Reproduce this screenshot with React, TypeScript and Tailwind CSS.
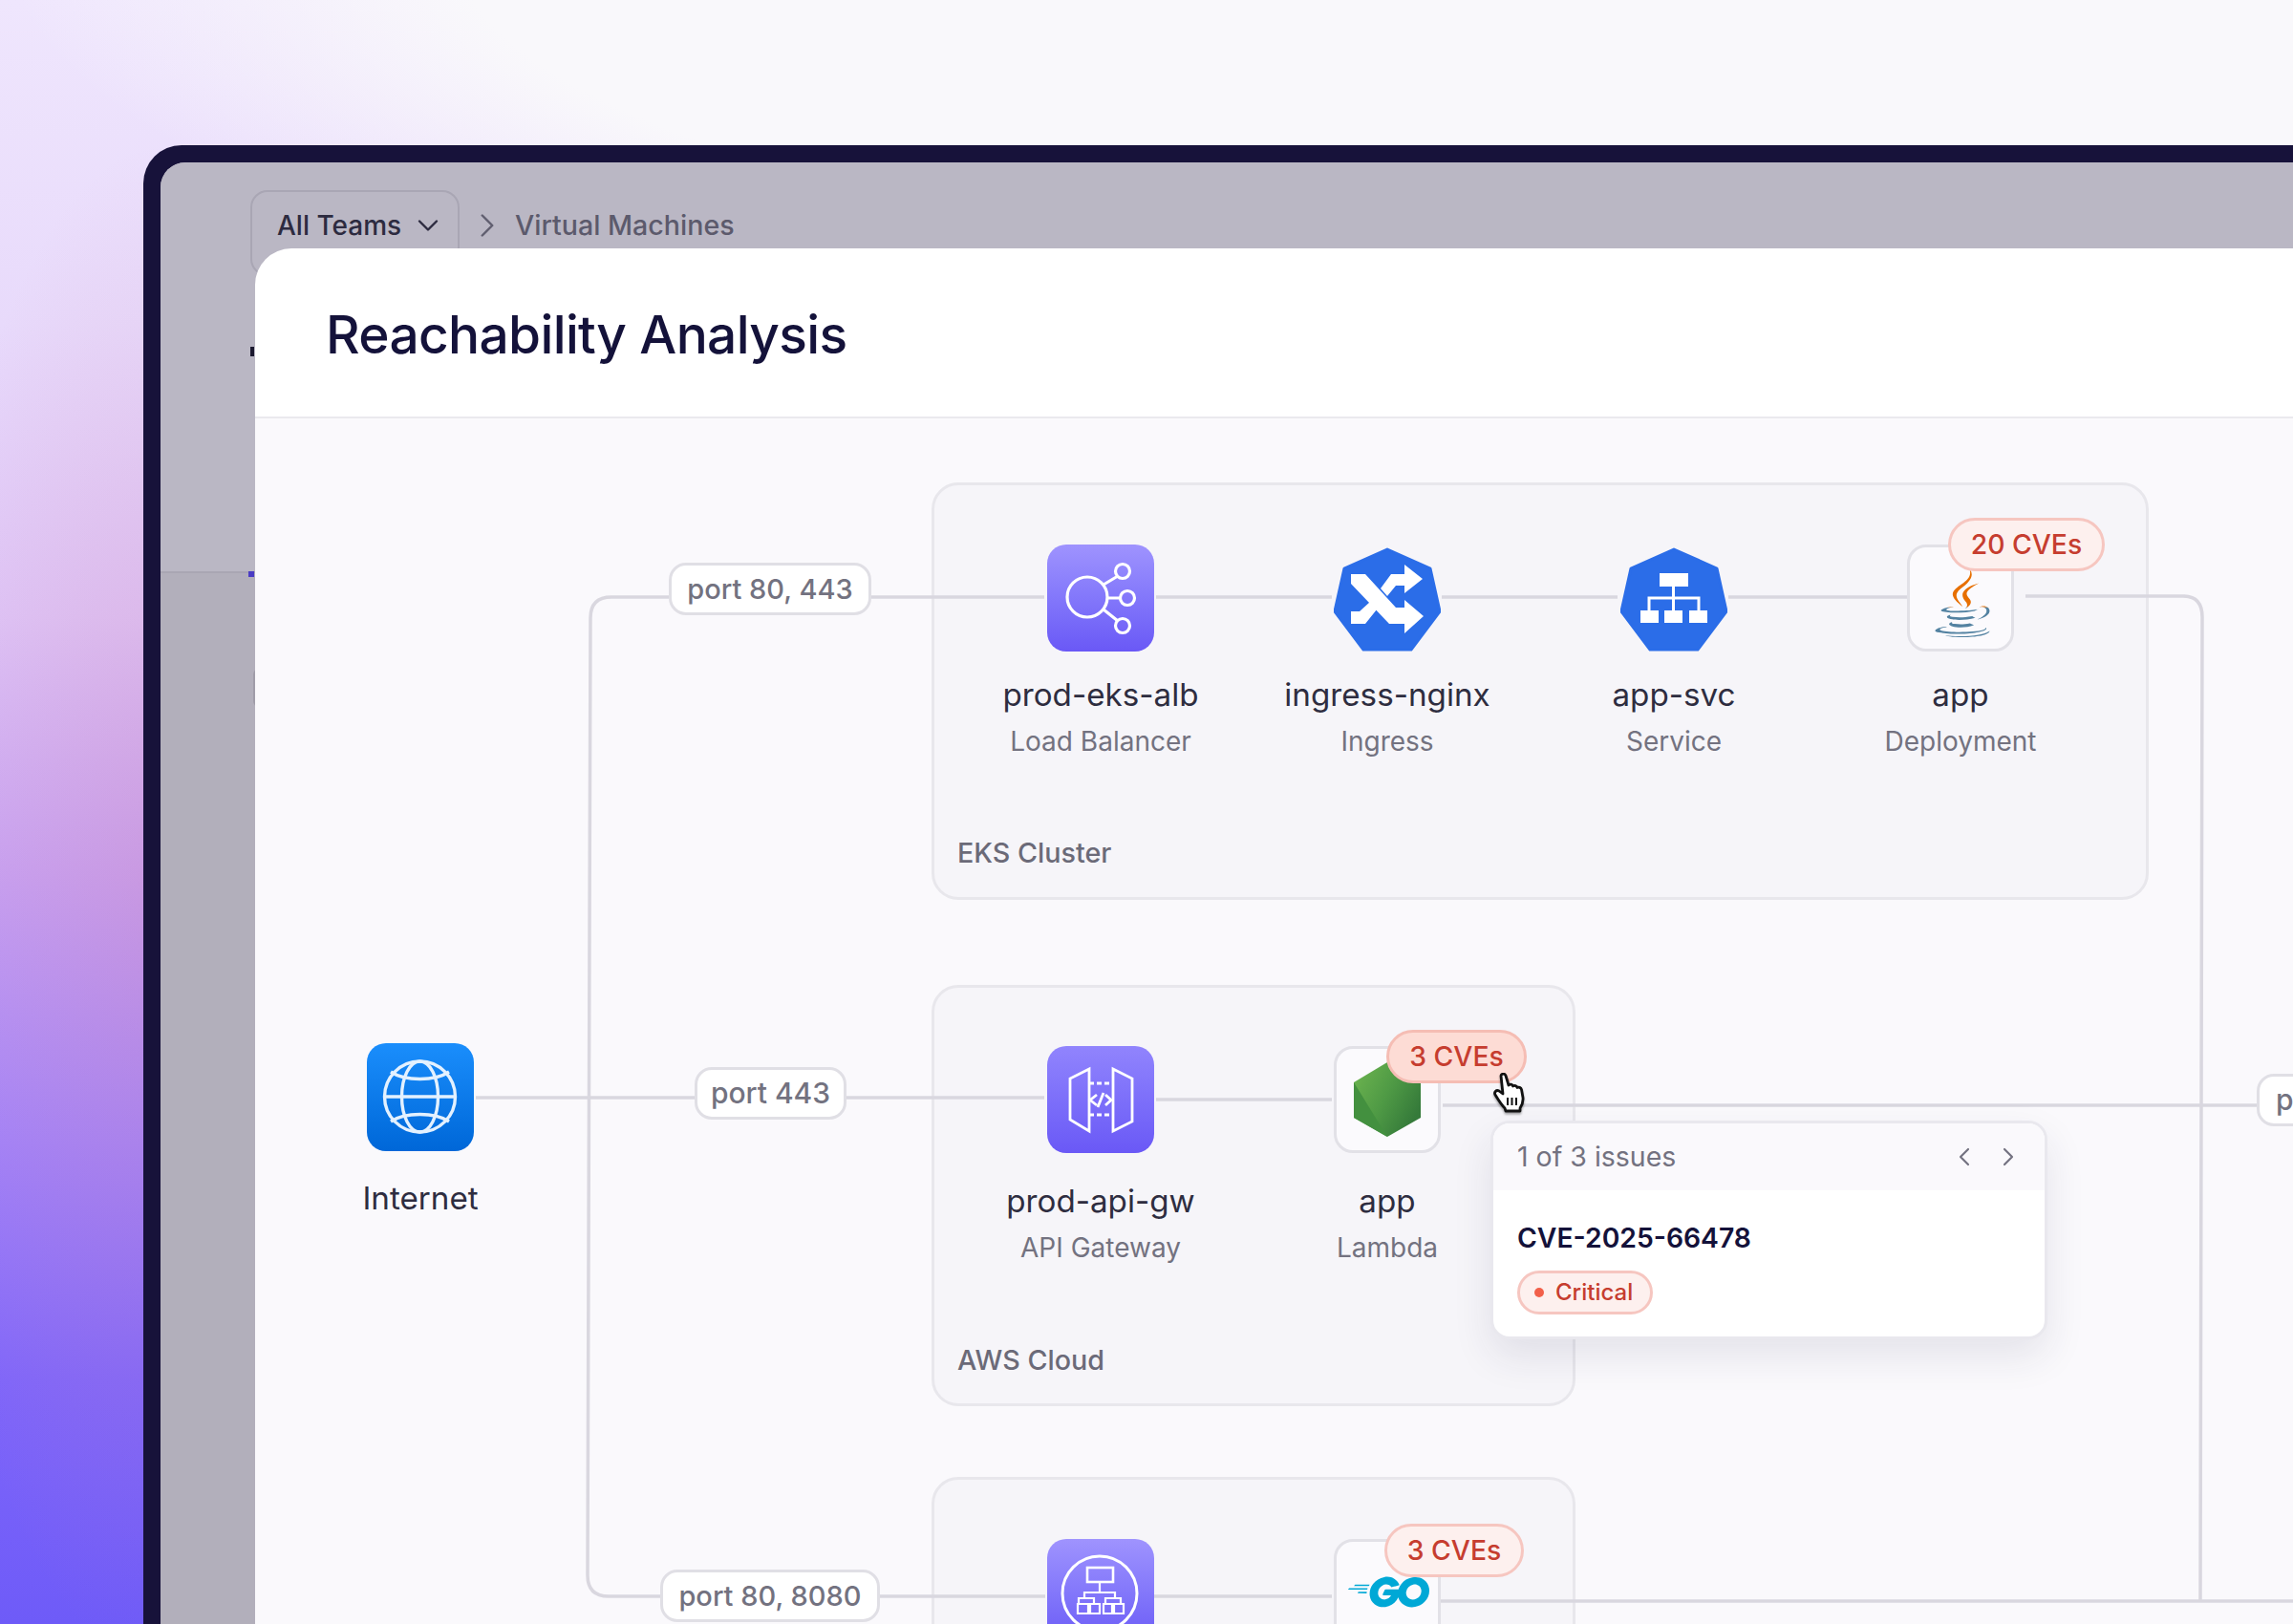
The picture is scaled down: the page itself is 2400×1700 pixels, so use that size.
import type { ReactNode } from "react"
import { ChevronDown, ChevronLeft, ChevronRight } from "lucide-react"
import { FaJava } from "react-icons/fa"
import { SiGo } from "react-icons/si"

function LoadBalancerIcon() {
  return (
    <svg viewBox="0 0 112 112" className="h-[112px] w-[112px]" fill="none" stroke="#fff" strokeWidth="3.2">
      <circle cx="42" cy="55" r="21" />
      <circle cx="79" cy="28" r="7.5" />
      <circle cx="84" cy="56" r="7.5" />
      <circle cx="79" cy="85" r="7.5" />
      <path d="M59 42 74 33M63 56H76M59 68 74 80" />
    </svg>
  )
}

function GatewayIcon() {
  return (
    <svg viewBox="0 0 112 112" className="h-[112px] w-[112px]" fill="none" stroke="#fff" strokeWidth="2.8">
      <path d="M44 24 24 34V77L44 89ZM69 24 89 34V79L69 89Z" />
      <path d="M44 39H69M44 72H69" strokeDasharray="5 3" />
      <path d="M52 51 45 56.5 52 62M61 51 67 56.5 61 62M59 49 53 64" />
    </svg>
  )
}

function SubnetIcon() {
  return (
    <svg viewBox="0 0 112 112" className="h-[112px] w-[112px]" fill="none" stroke="#fff" strokeWidth="3">
      <circle cx="55" cy="57" r="39" />
      <rect x="42" y="30" width="27" height="15" strokeWidth="2.6" />
      <path d="M55 45V55M39 62V56H71V62M33 68V62H49V68M61 68V62H77V68" strokeWidth="2.2" />
      <path d="M32 68H43V78H32ZM45 68H55V78H45ZM59 68H68V78H59ZM70 68H80V78H70Z" strokeWidth="2.2" />
    </svg>
  )
}

function GlobeIcon() {
  return (
    <svg viewBox="0 0 112 112" className="h-[112px] w-[112px]" fill="none" stroke="#e3f1ff" strokeWidth="3.4">
      <circle cx="55.5" cy="56" r="37" />
      <ellipse cx="55.5" cy="56" rx="19" ry="37" />
      <path d="M18.5 56H92.5M25 30C40 40 71 40 86 30M25 82C40 72 71 72 86 82" />
    </svg>
  )
}

function Heptagon({ children }: { children: ReactNode }) {
  return (
    <svg viewBox="0 0 112 112" className="h-[112px] w-[112px]">
      <path
        d="M56 5 101 25 111 70 81 110H31L1 70 11 25Z"
        fill="#2b6de8"
        stroke="#2b6de8"
        strokeWidth="3"
        strokeLinejoin="round"
      />
      {children}
    </svg>
  )
}

function IngressIcon() {
  return (
    <Heptagon>
      <g fill="#fff">
        <path d="M18 31H33L65 66H74V58L94 75 74 93V83H58L18 41Z" />
        <path d="M74 31H60L49 46 56 54 65 43H74V51L93 36 74 21Z" />
        <path d="M18 70H27L38 60 45 68 33 83H18Z" />
      </g>
    </Heptagon>
  )
}

function ServiceIcon() {
  return (
    <Heptagon>
      <g fill="#fff">
        <rect x="41" y="30" width="30" height="14" />
        <rect x="21" y="69" width="19" height="13" />
        <rect x="46" y="69" width="19" height="13" />
        <rect x="72" y="69" width="19" height="13" />
      </g>
      <path d="M55.5 44V69M30 69V56H82V69" fill="none" stroke="#fff" strokeWidth="3" />
    </Heptagon>
  )
}

function JavaIcon() {
  return (
    <div className="relative ml-[26px] mt-[23px] h-[71px] w-[58px]">
      <FaJava
        preserveAspectRatio="none"
        className="absolute inset-0 h-full w-full text-[#e76f00] [clip-path:inset(0_0_44%_0)]"
      />
      <FaJava
        preserveAspectRatio="none"
        className="absolute inset-0 h-full w-full text-[#5382a1] [clip-path:inset(56%_0_0_0)]"
      />
    </div>
  )
}

function NodeLogo() {
  return (
    <svg viewBox="0 0 112 112" className="-m-[3px] h-[112px] w-[112px]">
      <defs>
        <linearGradient id="nodeGreen" x1="0" y1="0" x2="1" y2="0.6">
          <stop offset="0" stopColor="#6fb650" />
          <stop offset="0.55" stopColor="#4f9a45" />
          <stop offset="1" stopColor="#357a3a" />
        </linearGradient>
      </defs>
      <path d="M56 17 91 38V75L56 95 21 75V38Z" fill="url(#nodeGreen)" />
      <path d="M21 38 56 95 21 75Z" fill="#43903f" />
    </svg>
  )
}

function IconTile({ from, children }: { from: string; children: ReactNode }) {
  return <div className={`h-[112px] w-[112px] rounded-[20px] bg-gradient-to-b ${from}`}>{children}</div>
}

function WhiteBox({ children }: { children: ReactNode }) {
  return <div className="h-[112px] w-[112px] rounded-[20px] border-[3px] border-[#e2e1e7] bg-[#fbfafd]">{children}</div>
}

function Badge({ label, className }: { label: string; className: string }) {
  return (
    <div
      className={`absolute flex h-[56px] items-center justify-center rounded-full border-[3px] text-[28.3px] font-medium text-[#c63d2f] ${className}`}
    >
      {label}
    </div>
  )
}

function Node({
  icon,
  name,
  sub,
  gap = "mt-[25px]",
  badge,
}: {
  icon: ReactNode
  name: string
  sub?: string
  gap?: string
  badge?: ReactNode
}) {
  return (
    <div className="flex w-[300px] flex-col items-center">
      <div className="relative z-20 h-[112px] w-[112px]">
        {icon}
        {badge}
      </div>
      <div className={`${gap} text-[33.2px] leading-[40px] font-[420] text-[#2e2d40]`}>{name}</div>
      {sub && <div className="mt-[11px] text-[28px] leading-[36px] text-[#737280]">{sub}</div>}
    </div>
  )
}

function Group({
  label,
  className,
  rowClass,
  labelClass,
  children,
}: {
  label?: string
  className: string
  rowClass: string
  labelClass?: string
  children: ReactNode
}) {
  return (
    <div className={`absolute flex flex-col rounded-[28px] border-[3px] border-[#e8e7ec] bg-[#f6f5f9] ${className}`}>
      <div className={`flex pl-[24px] ${rowClass}`}>{children}</div>
      {label && (
        <div className={`mt-auto ml-[24px] text-[28.7px] leading-[36px] font-medium text-[#6b6a78] ${labelClass}`}>
          {label}
        </div>
      )}
    </div>
  )
}

function Port({ label, className }: { label: string; className: string }) {
  return (
    <div
      className={`absolute z-20 flex h-[55px] items-center justify-center rounded-[18px] border-[3px] border-[#e0dfe5] bg-white font-medium whitespace-pre text-[#737280] ${className}`}
    >
      {label}
    </div>
  )
}

function Cursor() {
  return (
    <svg
      viewBox="0 0 36 42"
      className="absolute left-[1296px] top-[685px] z-40 h-[42px] w-[36px] drop-shadow-[0_2px_1px_rgba(0,0,0,0.35)]"
    >
      <path
        d="M8 3C8.5.8 12 .3 13 3L16 13C17.5 11.5 20 12 20.5 14 22 12.8 24.5 13.5 25 15.5 26.5 14.6 29 15.5 29.5 17.5L31 26C31.5 31 30 34 28 37V40H13L12 37C9 34 5 28 2 23 .5 20.5 3 17.5 6 19L10 22Z"
        fill="#fff"
        stroke="#111"
        strokeWidth="2.8"
        strokeLinejoin="round"
      />
      <path d="M15 26V34M19.5 26V34M24 26V34" stroke="#111" strokeWidth="2" fill="none" />
    </svg>
  )
}

function Wires() {
  return (
    <svg
      viewBox="267 437 2133 1263"
      className="absolute left-0 top-0 z-10 h-[1263px] w-[2133px]"
      fill="none"
      stroke="#d9d7df"
      strokeWidth="3.5"
    >
      <path d="M700 624H640Q618 624 618 646L615 1648Q615 1670 637 1670H691" />
      <path d="M912 624H1093M1210 624H1394M1509 624H1693M1809 624H1997" />
      <path d="M2120 623H2285Q2305 623 2305 645L2303 1675" />
      <path d="M498 1148H727M886 1148H1093M1210 1150H1394M1510 1156H2362" />
      <path d="M921 1670H1094M1207 1670H1394M1507 1675H2400" />
    </svg>
  )
}

function IssuePopover() {
  return (
    <div className="absolute left-[1293px] top-[735px] z-30 flex h-[229px] w-[583px] flex-col overflow-hidden rounded-[20px] border-[3px] border-[#e9e8ee] bg-white shadow-[0_18px_40px_rgba(40,35,80,0.1)]">
      <div className="flex h-[70px] items-center justify-between bg-[#faf9fc] pl-[25px] pr-[22px] text-[#737280]">
        <span className="text-[28.5px]">1 of 3 issues</span>
        <div className="flex gap-[14px]">
          <ChevronLeft className="h-[32px] w-[32px]" strokeWidth={1.6} />
          <ChevronRight className="h-[32px] w-[32px]" strokeWidth={1.6} />
        </div>
      </div>
      <div className="flex flex-col items-start pl-[25px] pt-[30px]">
        <div className="text-[28.3px] leading-[40px] font-semibold text-[#14123a]">CVE-2025-66478</div>
        <div className="mt-[14px] flex h-[46px] items-center gap-[12px] rounded-full border-[3px] border-[#f6c6c0] bg-[#fdf0ee] pl-[15px] pr-[18px] text-[24px] font-medium text-[#c63d2f]">
          <span className="h-[10px] w-[10px] rounded-full bg-[#f2604a]" />
          Critical
        </div>
      </div>
    </div>
  )
}

export default function App() {
  return (
    <div className="relative h-[1700px] w-[2400px] overflow-hidden bg-[radial-gradient(ellipse_1700px_470px_at_1700px_-60px,#f9f8fb_72%,rgba(249,248,251,0)_100%),radial-gradient(ellipse_260px_800px_at_170px_950px,rgba(205,130,180,0.3),rgba(205,130,180,0)_100%),linear-gradient(180deg,#efe6fd_0%,#e8dafb_20%,#dfc6f8_38%,#c7a2f4_54%,#a283fa_70%,#7f66fa_85%,#6e5bf8_100%)] pl-[150px] pt-[152px] font-['Inter',sans-serif]">
      <div className="h-full rounded-tl-[40px] bg-[#17123a] pl-[18px] pt-[18px]">
        <div className="relative h-full overflow-hidden rounded-tl-[26px] bg-[#b2afbb]">
          {/* dimmed page behind the dialog */}
          <div className="h-[430px] border-b-2 border-[#a9a6b3] bg-[#bab7c4] pl-[94px] pt-[29px]">
            <div className="flex items-start">
              <div className="flex h-[90px] w-[219px] items-start gap-[10px] rounded-[18px] border-2 border-[#a9a6b4] pl-[26px] pt-[17px] text-[28px] leading-[36px] font-medium text-[#2d2b40]">
                All Teams
                <ChevronDown className="shrink-0 text-[#2d2b40]" size={36} strokeWidth={1.6} />
              </div>
              <ChevronRight className="ml-[8px] mt-[16px] text-[#615f70]" size={42} strokeWidth={1.4} />
              <div className="ml-[8px] mt-[19px] text-[28.6px] leading-[36px] font-medium text-[#5c5a6c]">
                Virtual Machines
              </div>
            </div>
          </div>
          <div className="absolute left-[92px] top-[428px] h-[6px] w-[6px] bg-[#4a3cc4]" />
          <div className="absolute left-[94px] top-[193px] h-[10px] w-[4px] bg-[#1c1a30]" />
          <div className="absolute left-[97px] top-[530px] h-[40px] w-[6px] rounded-l-full border-l-2 border-[#a09da9]" />

          <div className="absolute left-[99px] top-[90px] flex h-[1500px] w-[2200px] flex-col rounded-tl-[38px] bg-white">
            <div className="flex h-[178px] shrink-0 items-center border-b-2 border-[#eae9ee] pl-[74px] pt-[4px]">
              <h1 className="text-[55px] font-medium tracking-[-0.65px] text-[#14123a]">Reachability Analysis</h1>
            </div>
            <div className="relative flex-1 bg-[#faf9fc]">
              <Wires />

              <Group
                label="EKS Cluster"
                className="left-[708px] top-[67px] h-[437px] w-[1274px]"
                rowClass="pt-[62px]"
                labelClass="mb-[28px]"
              >
                <Node
                  name="prod-eks-alb"
                  sub="Load Balancer"
                  icon={
                    <IconTile from="from-[#9f93fe] to-[#6a58f6]">
                      <LoadBalancerIcon />
                    </IconTile>
                  }
                />
                <Node name="ingress-nginx" sub="Ingress" icon={<IngressIcon />} />
                <Node name="app-svc" sub="Service" icon={<ServiceIcon />} />
                <Node
                  name="app"
                  sub="Deployment"
                  icon={
                    <WhiteBox>
                      <JavaIcon />
                    </WhiteBox>
                  }
                  badge={
                    <Badge
                      label="20 CVEs"
                      className="left-[43px] top-[-28px] w-[164px] border-[#f6c6c0] bg-[#fdf0ee]"
                    />
                  }
                />
              </Group>

              <Group
                label="AWS Cloud"
                className="left-[708px] top-[593px] h-[441px] w-[674px]"
                rowClass="pt-[61px]"
                labelClass="mb-[27px]"
              >
                <Node
                  name="prod-api-gw"
                  sub="API Gateway"
                  gap="mt-[30px]"
                  icon={
                    <IconTile from="from-[#9184fd] to-[#6a58f6]">
                      <GatewayIcon />
                    </IconTile>
                  }
                />
                <Node
                  name="app"
                  sub="Lambda"
                  gap="mt-[30px]"
                  icon={
                    <WhiteBox>
                      <NodeLogo />
                    </WhiteBox>
                  }
                  badge={
                    <Badge
                      label="3 CVEs"
                      className="left-[55px] top-[-17px] w-[147px] border-[#f5bdb4] bg-[#fddcd5]"
                    />
                  }
                />
              </Group>

              <Group className="left-[708px] top-[1108px] h-[440px] w-[674px]" rowClass="pt-[62px]">
                <Node
                  name=""
                  icon={
                    <IconTile from="from-[#9f93fe] to-[#6a58f6]">
                      <SubnetIcon />
                    </IconTile>
                  }
                />
                <Node
                  name=""
                  icon={
                    <WhiteBox>
                      <SiGo className="ml-[12px] mt-[10px] h-[85px] w-[85px] text-[#00a8d6]" />
                    </WhiteBox>
                  }
                  badge={
                    <Badge
                      label="3 CVEs"
                      className="left-[53px] top-[-16px] w-[146px] border-[#f6c6c0] bg-[#fdf0ee]"
                    />
                  }
                />
              </Group>

              <div className="absolute left-[117px] top-[654px] z-20 flex w-[112px] flex-col items-center">
                <div className="h-[113px] w-[112px] rounded-[20px] bg-gradient-to-b from-[#1a8efc] to-[#0067d8]">
                  <GlobeIcon />
                </div>
                <div className="mt-[29px] text-[33.2px] leading-[40px] font-[420] whitespace-nowrap text-[#2e2d40]">
                  Internet
                </div>
              </div>

              <Port label="port 80, 443" className="left-[433px] top-[151px] w-[212px] text-[29px]" />
              <Port label="port 443" className="left-[460px] top-[679px] w-[159px] text-[30px]" />
              <Port label="port 80, 8080" className="left-[424px] top-[1205px] w-[230px] text-[29px]" />
              <Port label="port 443" className="left-[2095px] top-[686px] w-[165px] text-[30px]" />

              <IssuePopover />
              <Cursor />
            </div>
          </div>
        </div>
      </div>
    </div>
  )
}
